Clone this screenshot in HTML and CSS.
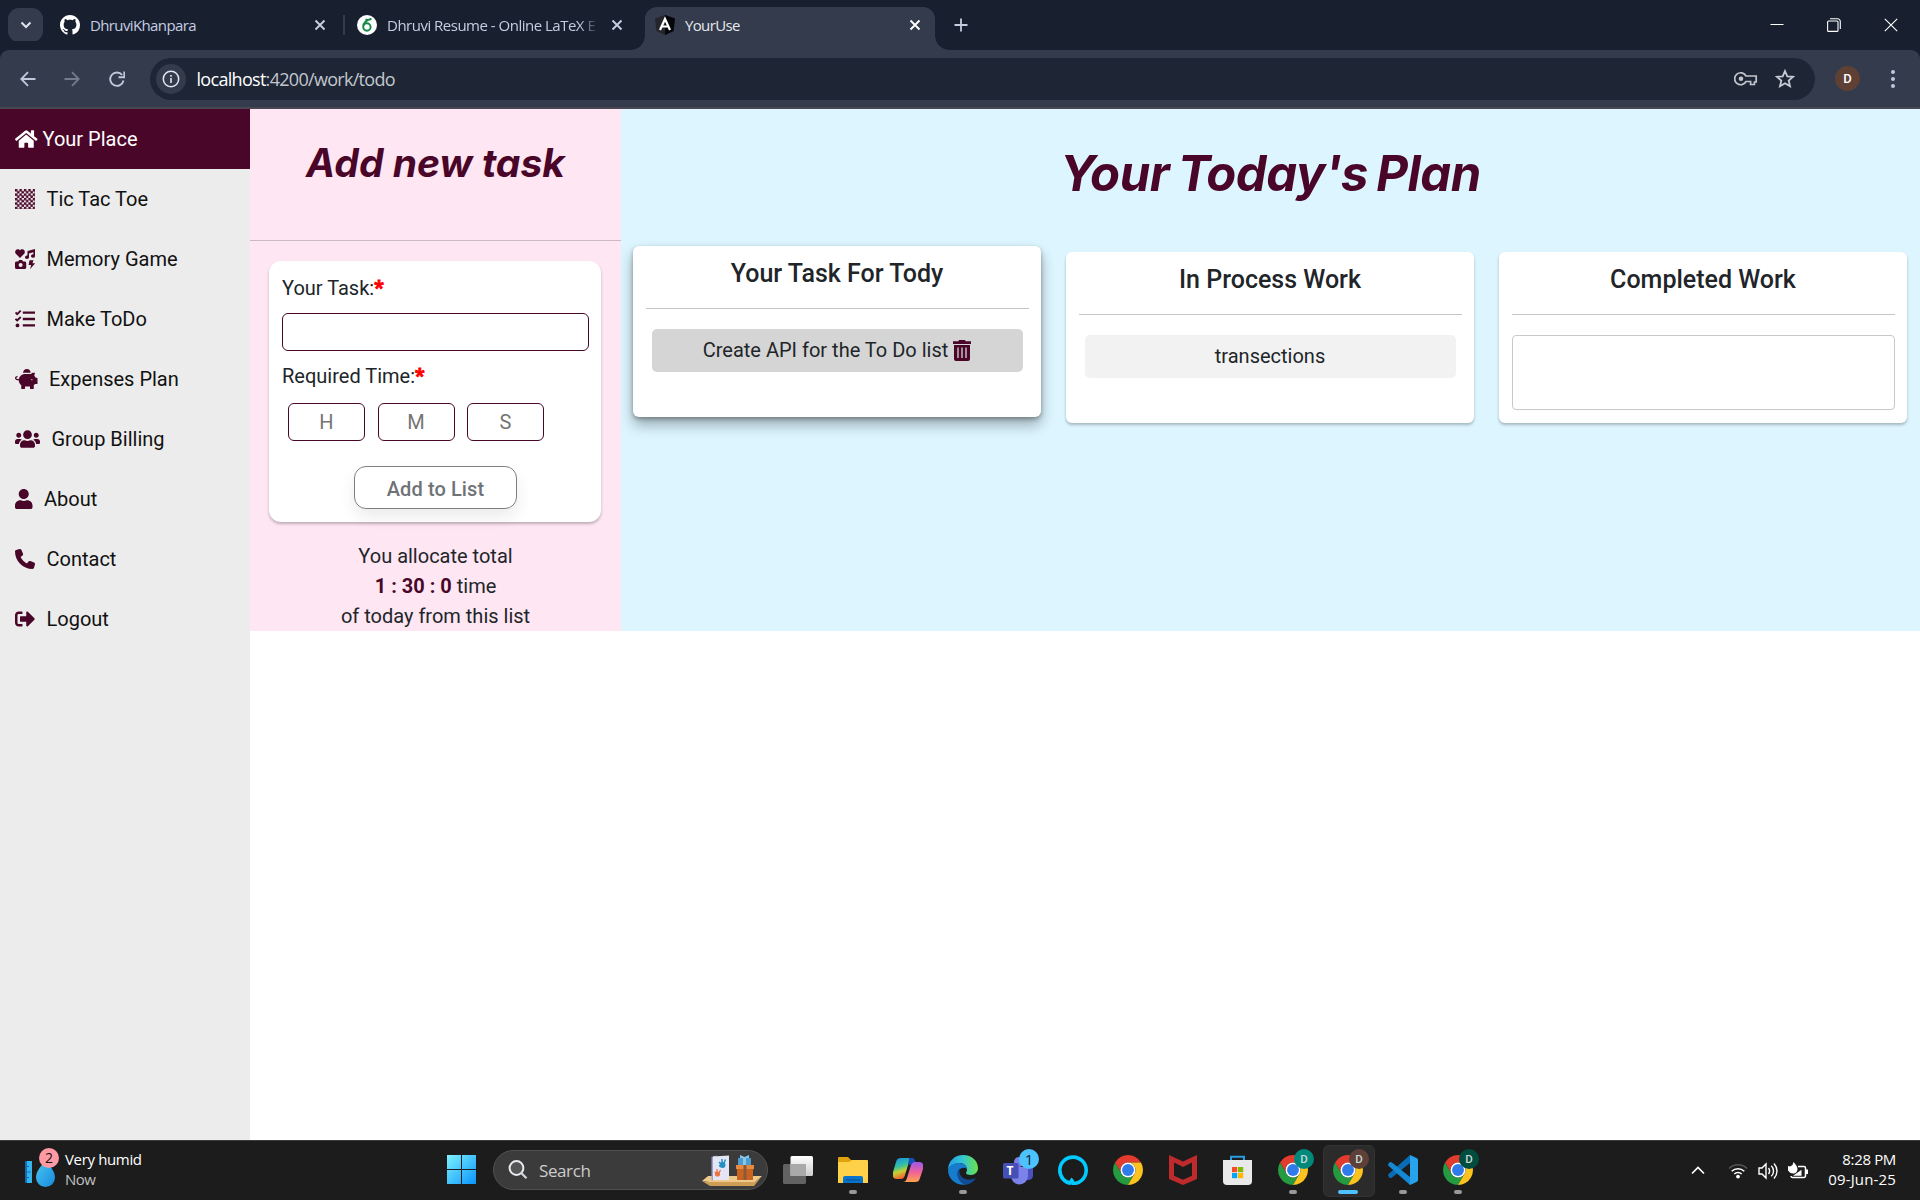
FILE: index.html
```html
<!DOCTYPE html>
<html lang="en">
<head>
<meta charset="utf-8">
<title>YourUse</title>
<link rel="stylesheet" href="styles.css">
</head>
<body>
<svg class="defs" width="0" height="0">
  <symbol id="x" viewBox="0 0 12 12"><path d="M1.5 1.5l9 9M10.500 1.500l-9 9" fill="none" stroke="currentColor" stroke-width="1.9"/></symbol>
  <symbol id="chrome" viewBox="2 2 44 44">
    <path fill="#e33b2e" d="M24 13h19.050A22 22 0 0 0 4.950 13L14.470 29.500A11 11 0 0 1 24 13z"/>
    <path fill="#249a41" d="M4.950 13A22 22 0 0 0 24 46L33.530 29.500A11 11 0 0 1 14.470 29.500z"/>
    <path fill="#fcc31e" d="M43.050 13A22 22 0 0 1 24 46L33.530 29.500A11 11 0 0 0 24 13z"/>
    <circle cx="24" cy="24" r="11" fill="#fff"/><circle cx="24" cy="24" r="8.700" fill="#2f7bea"/>
  </symbol>
</svg>

<header class="tabs">
  <div class="tab-search"><svg width="12" height="8" viewBox="0 0 12 8"><path d="M1.500 1.500L6 6l4.500-4.500" fill="none" stroke="#dfe3ee" stroke-width="2"/></svg></div>
  <div class="tab tab-github">
    <svg width="20" height="20" viewBox="0 0 16 16"><path fill="#fff" d="M8 0C3.580 0 0 3.580 0 8c0 3.540 2.290 6.530 5.470 7.590.4.070.55-.17.55-.38 0-.19-.01-.82-.01-1.490-2.010.37-2.530-.49-2.690-.94-.09-.23-.48-.94-.82-1.130-.28-.15-.68-.52-.01-.53.63-.01 1.080.58 1.230.82.72 1.210 1.870.87 2.330.66.070-.52.28-.87.510-1.070-1.780-.2-3.640-.89-3.640-3.950 0-.87.310-1.590.82-2.150-.08-.2-.36-1.020.08-2.120 0 0 .67-.21 2.200.82.64-.18 1.320-.27 2-.27s1.360.09 2 .27c1.530-1.040 2.200-.82 2.200-.82.44 1.100.16 1.920.08 2.120.510.56.82 1.270.82 2.150 0 3.070-1.870 3.750-3.650 3.950.29.25.54.73.54 1.480 0 1.070-.01 1.930-.01 2.200 0 .21.15.46.55.38A8.010 8.010 0 0 0 16 8c0-4.420-3.580-8-8-8z"/></svg>
    <span class="tab-title t-github">DhruviKhanpara</span>
    <svg class="close" width="12" height="12"><use href="#x"/></svg>
  </div>
  <i class="tab-sep"></i>
  <div class="tab tab-latex">
    <svg width="20" height="20" viewBox="0 0 20 20"><circle cx="10" cy="10" r="10" fill="#fff"/><path d="M14.500 4C10 4.500 6.200 7.500 6.200 12a3.700 3.700 0 1 0 3.700-3.700c-1.500 0-2.700.8-3.300 2M8.500 4.500c2 .8 4 .4 5.500-.8" fill="none" stroke="#138a43" stroke-width="1.900"/></svg>
    <span class="tab-title t-latex">Dhruvi Resume - Online LaTeX E</span>
    <svg class="close" width="12" height="12"><use href="#x"/></svg>
  </div>
  <div class="tab tab-active">
    <svg width="20" height="20" viewBox="0 0 20 20"><path fill="#24242b" d="M10 0l10 3.500-1.500 12.500L10 20l-8.500-4L0 3.500z"/><path fill="#05060a" d="M10 0l10 3.500-1.500 12.500L10 20z"/><path d="M5 15L10 4l5 11M7 11.500h6" fill="none" stroke="#fff" stroke-width="2.200"/></svg>
    <span class="tab-title t-use">YourUse</span>
    <svg class="close" width="12" height="12"><use href="#x"/></svg>
  </div>
  <svg class="new-tab" width="14" height="14" viewBox="0 0 14 14"><path d="M7 .5v13M.5 7h13" stroke="#c6cce0" stroke-width="1.800"/></svg>
  <div class="win">
    <svg width="14" height="14" viewBox="0 0 14 14"><path d="M.5 6.500h13" stroke="#fff"/></svg>
    <svg width="14" height="14" viewBox="0 0 14 14"><rect x=".6" y="3" width="10.400" height="10.400" rx="1" fill="none" stroke="#fff" stroke-width="1.100"/><path d="M3 .8h7.500a2.800 2.800 0 0 1 2.800 2.800V11" fill="none" stroke="#fff" stroke-width="1.100"/></svg>
    <svg width="14" height="14" viewBox="0 0 14 14"><path d="M.8.8l12.400 12.400M13.200.8L.8 13.200" stroke="#fff" stroke-width="1.100"/></svg>
  </div>
</header>

<div class="toolbar">
  <svg class="nav" width="16" height="16" viewBox="0 0 16 16"><path d="M15.500 8H1.500M8 1.200L1.300 8 8 14.800" fill="none" stroke="#c0c7dc" stroke-width="1.800"/></svg>
  <svg class="nav" width="16" height="16" viewBox="0 0 16 16"><path d="M.5 8h14M8 1.200L14.700 8 8 14.800" fill="none" stroke="#747b8c" stroke-width="1.800"/></svg>
  <svg class="nav reload" width="16" height="16" viewBox="0 0 16 16"><path d="M14.500 9.500A6.700 6.700 0 1 1 13.200 4" fill="none" stroke="#c0c7dc" stroke-width="1.900"/><path d="M15.300.5v5.700H9.500" fill="none" stroke="#c0c7dc" stroke-width="1.900"/></svg>
  <div class="url">
    <div class="info"><svg width="18" height="18" viewBox="0 0 18 18"><circle cx="9" cy="9" r="7.700" fill="none" stroke="#e3e6ee" stroke-width="1.500"/><path d="M9 8v5M9 5v1.800" stroke="#e3e6ee" stroke-width="1.600"/></svg></div>
    <span class="url-text">localhost<em>:4200/work/todo</em></span>
    <svg class="key" width="24" height="16" viewBox="0 0 24 16"><path d="M12 5h10.200v6h-1.800v2.500h-3.800V10.500H12A6 6 0 1 1 12 5z" fill="none" stroke="#c3c5cc" stroke-width="1.700"/><circle cx="7" cy="7.700" r="2.300" fill="#c3c5cc"/></svg>
    <svg width="20" height="19" viewBox="0 0 20 19"><path d="M10 2l2.300 5.300 5.700.5-4.300 3.800 1.300 5.600-5-3-5 3 1.300-5.600L2 7.800l5.700-.5z" fill="none" stroke="#c8cbd5" stroke-width="1.800"/></svg>
  </div>
  <div class="avatar">D</div>
  <svg class="dots" width="4" height="18" viewBox="0 0 4 18"><g fill="#c0c7dc"><circle cx="2" cy="2" r="2"/><circle cx="2" cy="9" r="2"/><circle cx="2" cy="16" r="2"/></g></svg>
</div>

<main class="page">
  <nav class="side">
    <a class="on"><svg width="22.500" height="20" viewBox="0 0 576 512"><path d="M280.370 148.260L96 300.110V464a16 16 0 0 0 16 16l112.060-.29a16 16 0 0 0 15.920-16V368a16 16 0 0 1 16-16h64a16 16 0 0 1 16 16v95.640a16 16 0 0 0 16 16.050L464 480a16 16 0 0 0 16-16V300L295.670 148.260a12.190 12.190 0 0 0-15.300 0zM571.600 251.470L488 182.560V44.050a12 12 0 0 0-12-12h-56a12 12 0 0 0-12 12v72.610L318.470 43a48 48 0 0 0-61 0L4.340 251.470a12 12 0 0 0-1.600 16.900l25.500 31A12 12 0 0 0 45.150 301l235.220-193.740a12.190 12.190 0 0 1 15.300 0L530.900 301a12 12 0 0 0 16.900-1.600l25.500-31a12 12 0 0 0-1.700-16.930z"/></svg>Your Place</a>
    <a><svg width="20" height="20" viewBox="0 0 20 20"><defs><pattern id="chk" width="4.450" height="4.450" patternUnits="userSpaceOnUse"><path d="M0 0h2.400v2.400H0zM2.100 2.100h2.350v2.350H2.100z"/></pattern></defs><rect width="20" height="20" fill="url(#chk)"/></svg>Tic Tac Toe</a>
    <a><svg width="20" height="20" viewBox="0 0 20 20"><path d="M5 9L.8 4.700C-.8 2.700.8 0 3 .2c1 0 1.600.6 2 1.200C5.500.8 6 .2 7 .2c2.200-.2 3.800 2.500 2.200 4.500zM12.500 2L20 0v7a2 1.700 0 1 1-1.600-1.600V3.300L14 4.500v3.700a2 1.700 0 1 1-1.600-1.600zM1.500 12.500h1.700l.9-1.400h3l.9 1.400h1.700c.9 0 1.500.6 1.500 1.500v4.500c0 .9-.6 1.500-1.500 1.500H1.500C.6 20 0 19.400 0 18.500V14c0-.9.6-1.500 1.500-1.500z"/><circle cx="5.600" cy="16" r="2" fill="#ececec"/><path d="M14.500 11.200h4l-1 3h2.700L15 20.200l1.200-4.300h-2.600z"/></svg>Memory Game</a>
    <a><svg width="20" height="20" viewBox="0 0 20 20"><path d="M7.800 3.700H20M7.800 10H20M7.800 16.400H20" stroke="#4a0628" stroke-width="2.300"/><path d="M.5 3.500l1.700 1.700L5.700 1.700M.5 9.800l1.700 1.700L5.700 8" fill="none" stroke="#4a0628" stroke-width="1.900"/><circle cx="2.500" cy="16.400" r="1.900"/></svg>Make ToDo</a>
    <a><svg width="22.500" height="20" viewBox="0 0 576 512"><path d="M560 224h-29.500c-8.800-20-21.600-37.700-37.400-52.500L512 96h-32c-29.400 0-55.400 13.500-73 34.300-7.600-1.100-15.100-2.300-23-2.300H256c-77.400 0-141.900 55-156.800 128H56c-14.800 0-26.500-13.500-23.500-28.800C34.700 215.800 45.400 208 57 208h1c3.300 0 6-2.700 6-6v-20c0-3.300-2.700-6-6-6-28.500 0-53.900 20.400-57.500 48.600C-3.900 258.800 22.700 288 56 288h40c0 52.200 25.400 98.100 64 127.300V496c0 8.800 7.200 16 16 16h64c8.800 0 16-7.200 16-16v-48h128v48c0 8.800 7.200 16 16 16h64c8.800 0 16-7.200 16-16v-80.700c11.800-8.900 22.300-19.400 31.300-31.300H560c8.800 0 16-7.200 16-16V240c0-8.800-7.200-16-16-16zm-128 64c-8.800 0-16-7.200-16-16s7.200-16 16-16 16 7.200 16 16-7.200 16-16 16zM256 96h128c5.400 0 10.700.4 15.900.8.1-.3.100-.5.100-.8 0-53-43-96-96-96s-96 43-96 96c0 2.100.5 4.100.6 6.200 15.200-3.900 31-6.200 47.400-6.200z"/></svg>Expenses Plan</a>
    <a><svg width="25" height="20" viewBox="0 0 640 512"><path d="M96 224c35.300 0 64-28.700 64-64s-28.700-64-64-64-64 28.700-64 64 28.700 64 64 64zm448 0c35.300 0 64-28.700 64-64s-28.700-64-64-64-64 28.700-64 64 28.700 64 64 64zm32 32h-64c-17.600 0-33.500 7.100-45.100 18.600 40.300 22.100 68.900 62 75.100 109.400h66c17.700 0 32-14.300 32-32v-32c0-35.300-28.700-64-64-64zm-256 0c61.900 0 112-50.100 112-112S381.900 32 320 32 208 82.100 208 144s50.100 112 112 112zm76.800 32h-8.300c-20.800 10-43.900 16-68.500 16s-47.600-6-68.500-16h-8.300C179.600 288 128 339.600 128 403.200V432c0 26.500 21.500 48 48 48h288c26.500 0 48-21.500 48-48v-28.800c0-63.600-51.600-115.200-115.200-115.200zm-223.700-13.400C161.500 263.100 145.600 256 128 256H64c-35.300 0-64 28.700-64 64v32c0 17.700 14.300 32 32 32h65.900c6.300-47.400 34.900-87.300 75.200-109.400z"/></svg>Group Billing</a>
    <a><svg width="17.500" height="20" viewBox="0 0 448 512"><path d="M224 256c70.700 0 128-57.300 128-128S294.700 0 224 0 96 57.300 96 128s57.300 128 128 128zm89.600 32h-16.700c-22.200 10.200-46.900 16-72.900 16s-50.600-5.800-72.900-16h-16.700C60.200 288 0 348.200 0 422.400V464c0 26.500 21.500 48 48 48h352c26.500 0 48-21.500 48-48v-41.600c0-74.200-60.200-134.400-134.400-134.400z"/></svg>About</a>
    <a><svg width="20" height="20" viewBox="0 0 512 512"><path d="M164.900 24.600c-7.700-18.600-28-28.500-47.400-23.200l-88 24C12.100 30.200 0 46 0 64C0 311.400 200.600 512 448 512c18 0 33.800-12.100 38.600-29.500l24-88c5.300-19.400-4.600-39.700-23.200-47.400l-96-40c-16.300-6.800-35.200-2.100-46.300 11.600L304.700 368C234.300 334.700 177.300 277.700 144 207.300L193.300 167c13.700-11.200 18.400-30 11.600-46.300l-40-96z"/></svg>Contact</a>
    <a><svg width="20" height="20" viewBox="0 0 512 512"><path d="M497 273L329 441c-15 15-41 4.500-41-17v-96H152c-13.300 0-24-10.700-24-24v-96c0-13.300 10.700-24 24-24h136V88c0-21.400 25.900-32 41-17l168 168c9.300 9.400 9.300 24.600 0 34zM192 436v-40c0-6.600-5.400-12-12-12H96c-17.700 0-32-14.300-32-32V160c0-17.700 14.300-32 32-32h84c6.600 0 12-5.400 12-12V76c0-6.600-5.400-12-12-12H96c-53 0-96 43-96 96v192c0 53 43 96 96 96h84c6.600 0 12-5.400 12-12z"/></svg>Logout</a>
  </nav>

  <section class="add">
    <h2>Add new task</h2>
    <form class="form">
      <label>Your Task:<b>*</b></label>
      <input class="task" type="text">
      <label class="second">Required Time:<b>*</b></label>
      <div class="times">
        <input type="text" placeholder="H"><input type="text" placeholder="M"><input type="text" placeholder="S">
      </div>
      <button type="button">Add to List</button>
    </form>
    <p>You allocate total<br><b>1 : 30 : 0</b> time<br>of today from this list</p>
  </section>

  <section class="plan">
    <h1>Your Today's Plan</h1>
    <div class="cards">
      <article class="card raised">
        <h3>Your Task For Tody</h3>
        <div class="item dark">Create API for the To Do list
          <svg width="18" height="21" viewBox="0 0 18 21"><path fill="#4a0628" d="M6 0h6l.6 1.300H18V4H0V1.300h5.400zM1 5h16v14a2 2 0 0 1-2 2H3a2 2 0 0 1-2-2z"/><path d="M5 7.500v10.500M9 7.500v10.500M13 7.500v10.500" stroke="#d5d5d5" stroke-width="1.300"/></svg>
        </div>
      </article>
      <article class="card">
        <h3>In Process Work</h3>
        <div class="item">transections</div>
      </article>
      <article class="card">
        <h3>Completed Work</h3>
        <div class="drop"></div>
      </article>
    </div>
  </section>
</main>

<footer class="taskbar">
  <div class="weather">
    <div class="humid">
      <svg width="34" height="38" viewBox="0 0 34 38"><defs><linearGradient id="drop" x2="1" y2="1"><stop stop-color="#4cc8f2"/><stop offset="1" stop-color="#1689dd"/></linearGradient></defs><rect y="11" width="7" height="22" fill="#35b5ee"/><path d="M0 11h2v22H0zM2 16h2v1H2zM2 21.500h3.500v1H2zM2 27h2v1H2z" fill="#1769b0"/><path d="M20.500 10c-4 6-9.500 11-9.500 17.500a9.500 9.500 0 0 0 19 0C30 21 24.500 16 20.500 10z" fill="url(#drop)"/></svg>
      <span class="count">2</span>
    </div>
    <div class="wtext"><span>Very humid</span><small>Now</small></div>
  </div>
  <div class="start"><svg width="29" height="29" viewBox="0 0 29 29"><defs><linearGradient id="win" x2="1" y2="1"><stop stop-color="#7df2ff"/><stop offset="1" stop-color="#0a94fb"/></linearGradient></defs><path fill="url(#win)" d="M0 0h14v14H0zM15 0h14v14H15zM0 15h14v14H0zM15 15h14v14H15z"/></svg></div>
  <div class="search">
    <svg width="20" height="20" viewBox="0 0 20 20"><circle cx="8.500" cy="8" r="6.900" fill="#555" stroke="#e8eaf0" stroke-width="2"/><path d="M13.500 13.200l5 5" stroke="#d0d3da" stroke-width="2.300"/></svg>
    <span>Search</span>
    <svg class="gift" width="60" height="32" viewBox="0 0 60 32"><path d="M0 27l6-5h54l-7 6H7z" fill="#edc98c"/><path d="M0 27l7 1h46l7-6-8 10H8z" fill="#cf9d55"/><path d="M9.500 3l5-1.500v24l-5 1z" fill="#9aa0c8"/><path d="M11 2.500l16-1V26H11z" fill="#e4e6f6"/><circle cx="20.500" cy="11" r="3" fill="#238fc2"/><path d="M17 8l2 2M20 5v4M23.500 5.500L22 9M17 12l3 0" stroke="#238fc2" stroke-width="1.500"/><circle cx="15.500" cy="20" r="2.600" fill="#ec7442"/><path d="M12.500 18l2 1M15 15v3M18.500 16L17 19" stroke="#ec7442" stroke-width="1.300"/><path d="M36 4h13v8H36z" fill="#4f9ccc"/><path d="M35 12h16v14H35z" fill="#c96420"/><path d="M34 11h18v4H34z" fill="#e58a3e"/><path d="M41.500 11h3v15h-3z" fill="#8b5a3a"/><path d="M41 3h3v8h-3zM38 1l4.500 2L47 1v3h-9z" fill="#87c7e9"/></svg>
  </div>
  <div class="apps">
    <div class="app"><svg width="30" height="28" viewBox="0 0 30 28"><defs><linearGradient id="tv" x2="0" y2="1"><stop stop-color="#fff"/><stop offset="1" stop-color="#ccc"/></linearGradient></defs><rect y="8" width="23" height="20" rx="1.500" fill="#626262"/><rect x="7.500" width="22.500" height="20" rx="1.500" fill="url(#tv)"/><path d="M7.500 8H23v12H7.500z" fill="#a9a9a9"/></svg></div>
    <div class="app run"><svg width="30" height="28" viewBox="0 0 30 28"><path d="M0 2a1 1 0 0 1 1-1h9l3 3h16v8H0z" fill="#e2a20c"/><path d="M0 6h11l3-2h15a1 1 0 0 1 1 1v22H0z" fill="#ffd149"/><path d="M5 27v-5a2 2 0 0 1 2-2h16a2 2 0 0 1 2 2v5z" fill="#0874c9"/><path d="M8 24h14" stroke="#064d8f"/></svg></div>
    <div class="app"><svg width="30" height="28" viewBox="0 0 30 28"><defs><linearGradient id="cp1" x2=".3" y2="1"><stop stop-color="#168de9"/><stop offset=".45" stop-color="#35c2a1"/><stop offset=".7" stop-color="#c8cf30"/><stop offset="1" stop-color="#f06230"/></linearGradient><linearGradient id="cp2" x2="0" y2="1"><stop stop-color="#9b58ee"/><stop offset=".5" stop-color="#ef6199"/><stop offset="1" stop-color="#ffa34e"/></linearGradient></defs><path d="M8 2h12c-2 0-3 1-4 4l-4 13c-1 3-2 4-4 4H4c-4 0-5-3-4-7L3 6c1-3 2-4 5-4z" fill="url(#cp1)"/><path d="M22 26H10c2 0 3-1 4-4l4-13c1-3 2-3 4-3h4c4 0 5 3 4 7l-3 9c-1 3-2 4-5 4z" fill="url(#cp2)"/><path d="M16 2h3c2 0 3 2 3.500 4-3-.2-4 .5-4.500 3l-3-1c.5-2 1-4 1-6z" fill="#1750b8"/></svg></div>
    <div class="app run"><svg width="30" height="30" viewBox="0 0 30 30"><defs><linearGradient id="ed" x2="1"><stop stop-color="#219ce7"/><stop offset=".5" stop-color="#35c7d2"/><stop offset="1" stop-color="#6ce246"/></linearGradient></defs><path d="M0 15C0 6 7 0 15 0c9 0 15 6 15 13 0 4-3 7-7 7-3 0-5-1-5-2 0-.8 1-1.500 1-3.500C19 11 16 8 12 8 6 8 2 11 0 15z" fill="url(#ed)"/><path d="M0 15c2-5 7-7 11-7 5 0 8 3 8 6-3-3-11 0-9 7 1 5 5 8 8 8.700C8 31 0 24 0 15z" fill="#187ccc"/><path d="M9.500 17c-1 6 3 11 8.500 12.700 4-.7 8-3 10-7-4 3-15 3-16.500-5.200-.4-2 .5-3.500 1.500-4.500-2 .5-3.200 2-3.500 4z" fill="#104d96"/></svg></div>
    <div class="app"><svg width="30" height="30" viewBox="0 0 30 30"><circle cx="25" cy="9" r="3.500" fill="#5c63cf"/><path d="M21 13h9v8a5 5 0 0 1-9 2z" fill="#4b52c0"/><circle cx="16" cy="7" r="5" fill="#7b83eb"/><path d="M8 12h17v9a8.500 8.500 0 0 1-17 0z" fill="#7b83eb"/><rect y="8" width="15.500" height="15.500" rx="1.500" fill="#464fb5"/></svg><span class="tee">T</span><span class="badge blue">1</span></div>
    <div class="app"><svg width="30" height="30" viewBox="0 0 30 30"><path d="M13 28.300C6.500 27.500 1.800 22 1.800 15A13.200 13.200 0 1 1 15 28.500c-.3-2-1-3.300-2.500-4.500" fill="none" stroke="#00caff" stroke-width="3.600"/></svg></div>
    <div class="app"><svg width="30" height="30"><use href="#chrome"/></svg></div>
    <div class="app"><svg width="28" height="30" viewBox="0 0 28 30"><path d="M0 0l14 6.500L28 0v24l-14 6-14-6zM5 7.500v13.200l9 4 9-4V7.500l-9 4.500z" fill="#bf2b2c"/></svg></div>
    <div class="app"><svg width="29" height="30" viewBox="0 0 29 30"><path d="M8 6V1.800h13V6" fill="none" stroke="#279ddf" stroke-width="2"/><path d="M0 5h29v21a4 4 0 0 1-4 4H4a4 4 0 0 1-4-4z" fill="#e9e9e9"/><path d="M9 12h5.200v5.200H9z" fill="#f25022"/><path d="M15 12h5.200v5.200H15z" fill="#7fba00"/><path d="M9 18h5.200v5.200H9z" fill="#00a4ef"/><path d="M15 18h5.200v5.200H15z" fill="#ffb900"/></svg></div>
    <div class="app run"><svg width="30" height="30"><use href="#chrome"/></svg><span class="badge teal">D</span></div>
    <div class="app run active"><svg width="30" height="30"><use href="#chrome"/></svg><span class="badge brown">D</span></div>
    <div class="app run"><svg width="30" height="30" viewBox="0 0 30 30"><path d="M22 0v8L4 22.500c-1 .8-2 .7-2.700 0L.5 21.300c-.6-.7-.6-1.700.2-2.400z" fill="#0a6cb5"/><path d="M22 30v-8L4 7.500c-1-.8-2-.7-2.700 0L.5 8.700c-.6.7-.6 1.700.2 2.400z" fill="#1488d2"/><path d="M22 0l6.500 3c1 .5 1.500 1.200 1.500 2v20c0 .8-.5 1.500-1.500 2L22 30z" fill="#27a3ee"/></svg></div>
    <div class="app run"><svg width="30" height="30"><use href="#chrome"/></svg><span class="badge green">D</span></div>
  </div>
  <div class="tray">
    <svg class="up" width="14" height="9" viewBox="0 0 14 9"><path d="M1 7.500L7 1.500l6 6" fill="none" stroke="#fff" stroke-width="1.700"/></svg>
    <svg width="20" height="16" viewBox="0 0 20 16"><g fill="none" stroke="#fff" stroke-width="1.600"><path d="M1 5.500a12.800 12.800 0 0 1 18 0" stroke="#555"/><path d="M3.700 8.300a9 9 0 0 1 12.600 0M6.300 11a5.300 5.300 0 0 1 7.400 0"/></g><circle cx="10" cy="13.600" r="1.900" fill="#fff"/></svg>
    <svg width="20" height="18" viewBox="0 0 20 18"><path d="M1 6h3l4-4v14l-4-4H1zM10.500 6c1.500 2 1.500 4 0 6M13.300 3.800c3 3 3 7.400 0 10.400M16 1.500c4 4.500 4 10.500 0 15" fill="none" stroke="#fff" stroke-width="1.400"/></svg>
    <svg width="20" height="18" viewBox="0 0 20 18"><path d="M10 4.500h6A1.500 1.500 0 0 1 17.500 6v8a1.500 1.500 0 0 1-1.500 1.500H4.500A1.500 1.500 0 0 1 3 14" fill="none" stroke="#fff" stroke-width="1.500"/><path d="M18 7.500h2v4.500h-2zM5.500 0c3 3 5.500 7 3 10C6.500 12.500 2 11.500 1 9.500l-1-1V4l2 .5L4.500 3zM5 13.800l8.500-6v6z" fill="#fff"/></svg>
    <div class="clock"><span class="time">8:28 PM</span><span class="date">09-Jun-25</span></div>
  </div>
</footer>
</body>
</html>
```

FILE: styles.css
```css
* { box-sizing: border-box; }
body {
  margin: 0; width: 1920px; height: 1200px; overflow: hidden;
  display: flex; flex-direction: column; background: #fff;
  font-family: Roboto, "Liberation Sans", sans-serif; color: #212529;
}
svg { display: block; flex: none; }
.defs { position: absolute; }

/* browser tab strip */
.tabs {
  height: 50px; flex: none; display: flex; align-items: center; background: #182030;
  padding-left: 8px; font-family: "Open Sans", sans-serif; color: #c6cce0;
}
.tab-search {
  width: 35px; height: 34px; border-radius: 11px; background: #333b4c;
  display: flex; align-items: center; justify-content: center;
}
.tab { display: flex; align-items: center; }
.tab-title { font-size: 15px; line-height: 22px; white-space: nowrap; overflow: hidden; margin-left: 10px; }
.close { margin-left: auto; color: #c9cfe0; }
.tab-github { width: 266px; margin-left: 17px; }
.tab-sep { width: 2px; height: 20px; background: #333b4c; margin: 0 12px 0 17px; }
.tab-latex { width: 266px; }
.t-github { letter-spacing: -.62px; }
.t-latex {
  width: 208px; letter-spacing: -.5px;
  -webkit-mask-image: linear-gradient(90deg, #000 192px, transparent 212px);
}
.t-use { letter-spacing: -.65px; color: #e6e8ee; }
.tab-active {
  width: 290px; height: 43px; margin: 7px 0 0 22px; padding: 0 14px 7px 10px;
  background: #333b4c; border-radius: 12px 12px 0 0; position: relative;
}
.tab-active::before, .tab-active::after {
  content: ""; position: absolute; bottom: 0; width: 14px; height: 14px;
}
.tab-active::before { left: -14px; background: radial-gradient(circle at 0 0, transparent 13.5px, #333b4c 14px); }
.tab-active::after { right: -14px; background: radial-gradient(circle at 100% 0, transparent 13.5px, #333b4c 14px); }
.tab-active .close { color: #fff; }
.new-tab { margin-left: 19px; }
.win { margin-left: auto; padding-right: 22px; display: flex; gap: 43px; }

/* address bar */
.toolbar {
  height: 59px; flex: none; display: flex; align-items: center; background: #333b4c;
  border-bottom: 2px solid #494852; padding-left: 20px; box-shadow: 0 -9px 0 0 #182030;
  border-radius: 9px 9px 0 0; font-family: "Open Sans", sans-serif;
}
.nav { margin-right: 28px; }
.reload { margin: 0 27px 0 1px; }
.url {
  width: 1665px; height: 42px; border-radius: 21px; background: #1e2636; margin-left: -2px;
  display: flex; align-items: center; padding: 0 20px 0 6px;
}
.info { width: 30px; height: 30px; border-radius: 50%; background: #333b4c; display: flex; align-items: center; justify-content: center; }
.url-text { font-size: 18px; letter-spacing: -.7px; color: #fff; margin-left: 10.500px; margin-right: auto; }
.url-text em { font-style: normal; color: #c3c6cd; }
.key { margin-right: 17px; }
.avatar {
  width: 25px; height: 25px; border-radius: 50%; background: #5f4035; color: #fff; margin-left: 20px;
  font: 500 13px/25px Roboto, sans-serif; text-align: center;
}
.dots { margin-left: 31px; }

/* application */
.page { height: 1031px; flex: none; display: flex; align-items: flex-start; }
.side { width: 250px; height: 1031px; background: #ececec; }
.side a {
  height: 60px; display: flex; align-items: center; gap: 11.5px; padding-left: 15px;
  font-size: 20px; color: #111; fill: #4a0628;
}
.side a.on { background: #4a0628; color: #fff; fill: #fff; gap: 5px; }

.add { width: 371px; height: 522px; background: #fee6f3; }
.add h2, .plan h1 {
  margin: 0; color: #4a0628; text-align: center; white-space: nowrap;
  font-family: Inter, "Open Sans", sans-serif; font-weight: 700; font-style: italic;
  font-feature-settings: "cv11";
}
.add h2 { height: 132px; padding-top: 24px; border-bottom: 1px solid #cab8c4; font-size: 39px; line-height: 60px; }
.form {
  margin: 20px 20px 0 19px; height: 261px; border-radius: 12px; background: #fff; padding: 12px 12px 0 13px;
  box-shadow: 0 2px 3px rgba(0,0,0,.25); display: flex; flex-direction: column;
}
.form label { font-size: 20px; line-height: 30px; }
.form label b { color: red; font-weight: 900; -webkit-text-stroke: .9px red; }
.form input {
  border: 1px solid #4a0628; border-radius: 6px; height: 38px; padding: 0; background: #fff; font: 20px Roboto, sans-serif;
  text-align: center;
}
.form input::placeholder { color: #757575; }
.form .task { margin: 10px 0 10px; }
.times { display: flex; gap: 12.5px; margin: 12px 0 0 6px; }
.times input { width: 77px; }
.form button {
  align-self: center; width: 163px; height: 43px; margin-top: 25px; border: 1px solid #7d7f81; border-radius: 12px;
  background: #fff; color: #707376; font: 500 20px Roboto, sans-serif; letter-spacing: .1px; padding: 3px 0 0;
  box-shadow: 0 8px 16px rgba(0,0,0,.08);
}
.add p { margin: 19px 0 0; text-align: center; font-size: 20px; line-height: 30px; }
.add p b { color: #4a0628; }

.plan { flex: 1; height: 522px; background: #dcf5ff; }
.plan h1 { font-size: 49px; line-height: 75px; padding-top: 27px; height: 143px; letter-spacing: -.4px; word-spacing: -3px; }
.cards { display: flex; gap: 25px; padding: 0 13px 0 12px; }
.card { flex: 1; height: 171px; border-radius: 6px; background: #fff; padding: 13px 12.5px 0; box-shadow: 0 2px 3px rgba(0,0,0,.25); text-align: center; }
.raised { margin-top: -6px; margin-bottom: 6px; box-shadow: 0 8px 14px rgba(0,0,0,.3), 0 2px 4px rgba(0,0,0,.3); }
.card h3 { margin: 0 0 20px; height: 50px; border-bottom: 1px solid #c4c5c6; font-weight: 500; font-size: 25px; line-height: 30px; }
.item {
  height: 43px; margin: 0 6px; border-radius: 5px; background: #f2f2f2; font-size: 20px; padding-bottom: 1px;
  display: flex; align-items: center; justify-content: center; gap: 5px;
}
.item.dark { background: #d5d5d5; }
.drop { height: 75px; border: 1px solid #c8c8c8; border-radius: 4px; }

/* desktop taskbar */
.taskbar {
  height: 60px; flex: none; background: #1c1c1c; border-top: 1px solid #3b3b3b; display: flex; align-items: center;
  color: #fff; font-family: "Open Sans", "Noto Sans", sans-serif;
}
.weather { width: 433px; padding: 0 0 3px 25px; display: flex; align-items: center; }
.humid { position: relative; }
.count {
  position: absolute; left: 14px; top: -2px; width: 20px; height: 20px; border-radius: 50%; background: #ff99a4;
  color: #111; font-size: 14px; line-height: 20px; text-align: center;
}
.wtext { margin: -1px 0 0 6px; display: flex; flex-direction: column; font-size: 15px; line-height: 20px; letter-spacing: -.35px; }
.wtext small { font-size: 15px; color: #c0c0c0; letter-spacing: -.5px; }
.start { width: 60px; padding: 0 0 2px 14px; }
.search {
  width: 275px; height: 40px; border-radius: 20px; background: #3b3b3b; border: 1px solid #505050; margin-bottom: 1px;
  display: flex; align-items: center; padding: 0 5px 0 14px; font-size: 17px; color: #ccc;
}
.search span { margin-left: 11px; letter-spacing: -.4px; }
.gift { margin-left: auto; }
.apps { display: flex; margin-left: 2px; }
.app { width: 55px; height: 59px; padding-bottom: 1px; display: flex; align-items: center; justify-content: center; position: relative; }
.app svg { position: relative; }
.run::after { content: ""; position: absolute; left: 23.5px; top: 49px; width: 8px; height: 4px; border-radius: 2px; background: #999; }
.active::before { content: ""; position: absolute; left: 2.5px; top: 4px; width: 50px; height: 50px; border-radius: 6px; background: #2b2b2b; border: 1px solid #333; }
.active::after { left: 17.5px; width: 20px; background: #4cc2ff; }
.badge {
  position: absolute; left: 29px; top: 8px; width: 20px; height: 20px; border-radius: 50%;
  text-align: center; font: 500 11.500px/20px Roboto, sans-serif; color: #c8d8d4;
}
.blue { background: #4cc2ff; color: #102030; font: 15px/20px "Open Sans", sans-serif; }
.teal { background: #00897b; }
.brown { background: #5d4037; }
.green { background: #004d40; }
.tee { position: absolute; left: 12.5px; top: 22px; width: 15px; text-align: center; font: 700 12px/15px "Open Sans", sans-serif; }
.tray { margin-left: auto; padding-right: 24px; display: flex; align-items: center; gap: 10px; }
.tray .up { margin-right: 13px; }
.clock { width: 78px; padding-bottom: 4px; display: flex; flex-direction: column; align-items: flex-end; font-size: 15px; line-height: 20px; letter-spacing: -.35px; white-space: nowrap; }
.date { letter-spacing: .15px; }
```
